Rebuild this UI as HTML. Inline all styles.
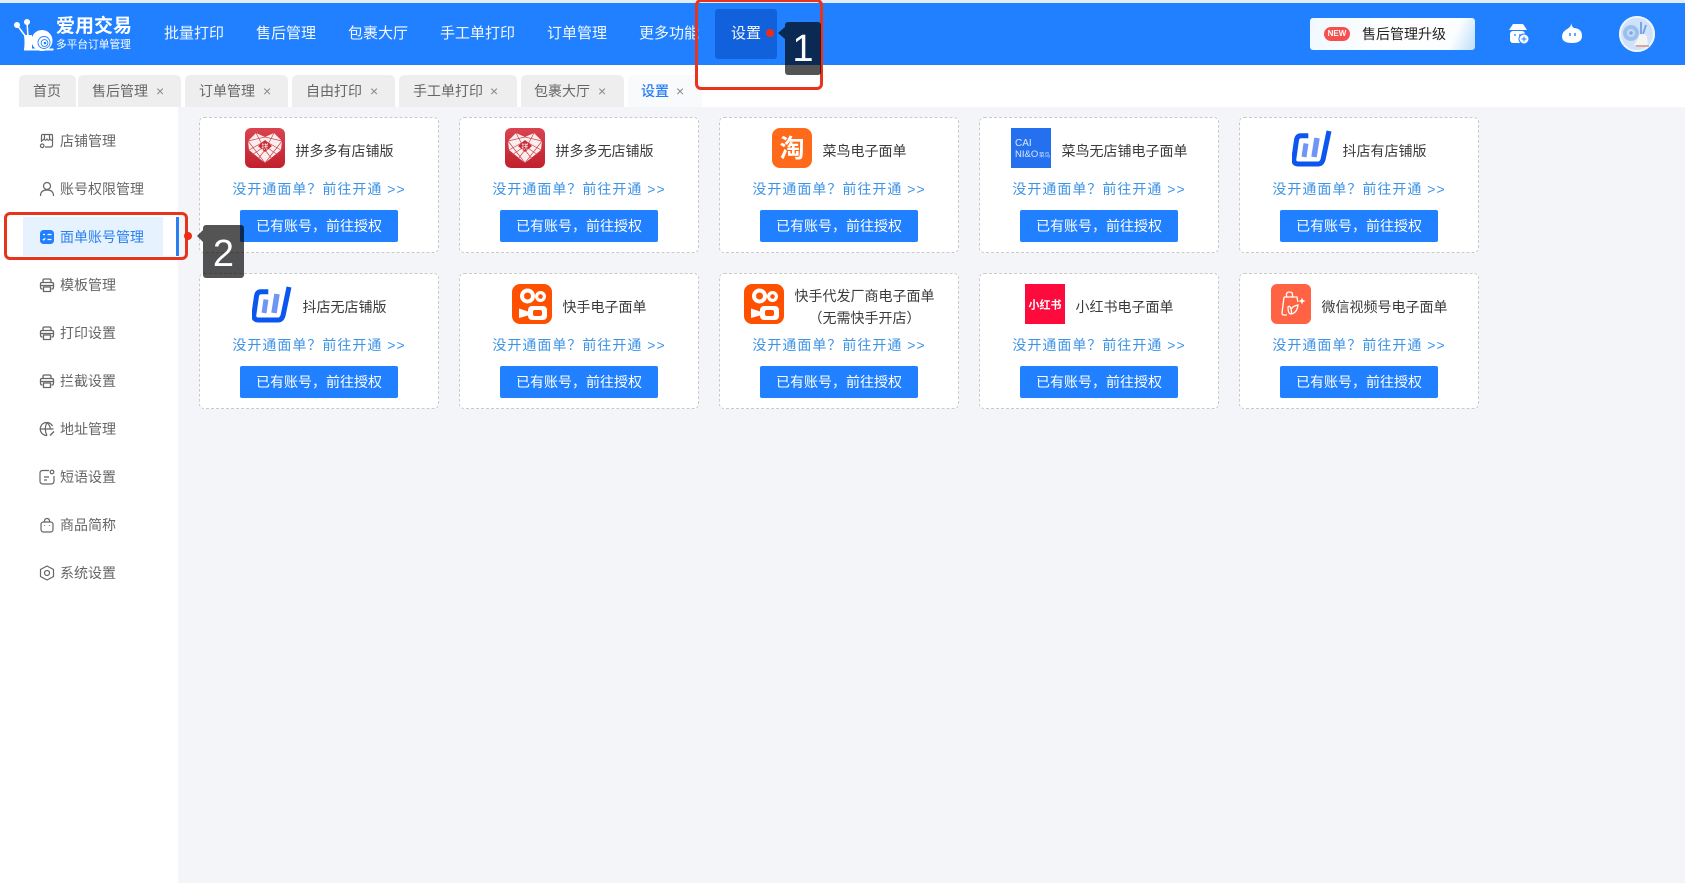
<!DOCTYPE html>
<html lang="zh-CN"><head><meta charset="utf-8"><title>爱用交易</title>
<style>
*{box-sizing:border-box;margin:0;padding:0}
html{background:#f3f5f9}
html,body{width:1685px;height:883px;overflow:hidden}
body{background:#f3f5f9;font-family:"Liberation Sans","Noto Sans CJK SC",sans-serif;font-size:14px;color:#333;filter:blur(.3px)}
.a{position:absolute;white-space:nowrap}
#top{left:0;top:0;width:1685px;height:3px;background:#e3edf6}
#hd{left:0;top:3px;width:1685px;height:62px;background:#2080ff}
.nav{top:23px;height:22px;line-height:22px;color:#fff;font-size:15px;opacity:.95}
#tabbar{left:0;top:65px;width:1685px;height:42px;background:#fff}
.tab{top:75px;height:32px;background:#eeeeee;border-radius:5px 5px 0 0}
.tab b{position:absolute;top:5px;line-height:22px;font-weight:400;font-size:14px;color:#666;white-space:nowrap}
.tab i{position:absolute;top:5px;font-style:normal;line-height:22px;font-size:14px;color:#888;font-family:"Liberation Sans",sans-serif}
#side{left:0;top:107px;width:178px;height:776px;background:#fff}
.si{left:60px;height:22px;line-height:22px;color:#666;font-size:14px}
.ic{position:absolute;left:39px;width:16px;height:16px}
.card{width:240px;height:136px;background:#fff;border:1px dashed #c9c9c9;border-radius:5px}
.h{position:absolute;left:0;top:10px;width:238px;height:40px;display:flex;justify-content:center;align-items:center;gap:11px}
.h svg{flex:none;display:block}
.h span{position:relative;top:3px;font-size:14px;color:#3a3a3a;line-height:22px;text-align:center;white-space:nowrap}
.lk{position:absolute;left:0;top:60px;width:238px;text-align:center;line-height:22px;color:#3d93e6;letter-spacing:1px;font-size:14px;white-space:nowrap}
.bt{position:absolute;left:40px;top:92px;width:158px;height:32px;line-height:32px;text-align:center;color:#fff;background:#2080ff;border-radius:2px;font-size:14px}
.lab{background:rgba(0,0,0,.67);color:#fff;font-family:"Liberation Sans",sans-serif;text-align:center;border-radius:3px}
.red{border:3px solid #e8341c;border-radius:6px}
.dot{width:8px;height:8px;border-radius:50%;background:#ee2c14}
svg.st{fill:none;stroke:#666;stroke-width:1.2}
</style></head><body>
<svg width="0" height="0" style="position:absolute">
<defs>
<linearGradient id="pg" x1="0" y1="0" x2="0" y2="1"><stop offset="0" stop-color="#d9434f"/><stop offset="1" stop-color="#c0202c"/></linearGradient>
<symbol id="pdd" viewBox="0 0 40 40"><rect width="40" height="40" rx="6" fill="url(#pg)"/><path d="M3 13 11 5l9 4 9-4 8 8-1 9-16 13L4 22z" fill="#fbeeee"/><path d="M3 13 20 9 37 13M4 22 20 13 36 22M11 5l9 17 9-17M7 27 20 18 33 27M13 31 20 22 27 31M3 13l17 22M37 13 20 35" stroke="#d0434c" stroke-width=".7" fill="none"/><path d="M20 12 27 18 20 24 13 18z" fill="#c92a35"/><text x="20" y="21" font-size="7" text-anchor="middle" fill="#fff" font-family="Noto Sans CJK SC,sans-serif">拼</text></symbol>
<symbol id="dy" viewBox="0 0 40 40"><path d="M16.300 7.700H9Q5.200 7.700 4.500 12L1.800 31Q1.500 36 6.500 36H26Q30.200 36 31.300 30.300L37 3" fill="none" stroke="#0a56ee" stroke-width="5"/><path d="M14 15.500 12 29" stroke="#6f96f5" stroke-width="5"/><path d="M25 10 22 29" stroke="#6f96f5" stroke-width="5.500"/></symbol>
<symbol id="ks" viewBox="0 0 40 40"><rect width="40" height="40" rx="8" fill="#ff5000"/><circle cx="15.500" cy="12" r="7.500" fill="#fff"/><circle cx="15.500" cy="12" r="3.500" fill="#ff5000"/><circle cx="28.500" cy="12.500" r="5.500" fill="#fff"/><circle cx="28.500" cy="12.500" r="2.300" fill="#ff5000"/><rect x="16" y="22" width="19" height="14" rx="4" fill="#fff"/><rect x="21" y="26" width="9" height="6" rx="2" fill="#ff5000"/><path d="M7 24.500 16 27.500v4L7 34z" fill="#fff"/></symbol>
<symbol id="pr" viewBox="0 0 16 16"><path d="M4 5V3.500Q4 2 5.500 2h5Q12 2 12 3.500V5M3.500 12H3Q1.500 12 1.500 10V7Q1.500 5.500 3 5.500h10q1.500 0 1.500 1.500v3q0 2-1.500 2h-.5M1.500 8.500h13M4.500 10h7v4.500h-7z" fill="none" stroke="#666" stroke-width="1.300"/></symbol>
</defs></svg>

<div class="a" id="top"></div>
<div class="a" id="hd"></div>

<svg class="a" style="left:0;top:0" width="60" height="60" viewBox="0 0 60 60" fill="#fff"><circle cx="17" cy="25" r="3"/><circle cx="27" cy="22" r="3"/><path d="M17 25 26 37M27 22 28 37" stroke="#fff" stroke-width="1.500"/><path d="M24 35h8v15h-8q1-7 0-15z"/><circle cx="42" cy="40.500" r="10.500"/><rect x="24" y="48.500" width="29.500" height="2"/><circle cx="44" cy="42.500" r="6" fill="none" stroke="#2080ff" stroke-width=".9"/><circle cx="44.500" cy="43" r="3.400" fill="none" stroke="#2080ff" stroke-width=".9"/><circle cx="45" cy="43" r="1.300" fill="#2080ff"/></svg>
<div class="a" style="left:56px;top:16px;font-size:19px;line-height:22px;font-weight:700;color:#fff">爱用交易</div>
<div class="a" style="left:56px;top:39px;font-size:10.700px;line-height:13px;color:#fff">多平台订单管理</div>

<div class="a nav" style="left:164px">批量打印</div>
<div class="a nav" style="left:256px">售后管理</div>
<div class="a nav" style="left:348px">包裹大厅</div>
<div class="a nav" style="left:440px">手工单打印</div>
<div class="a nav" style="left:547px">订单管理</div>
<div class="a nav" style="left:639px">更多功能</div>
<div class="a" style="left:715px;top:9px;width:62px;height:50px;background:#1261dc;border-radius:3px"></div>
<div class="a nav" style="left:731px">设置</div>

<div class="a" style="left:1310px;top:18px;width:165px;height:32px;border-radius:3px;background:linear-gradient(115deg,#f0f8ff 0%,#ffffff 50%,#fbfdff 85%,#bcdff7 100%)"></div>
<div class="a" style="left:1324px;top:27px;width:26px;height:14px;border-radius:7px;background:#f5504e;color:#fff;font-size:8px;line-height:14px;text-align:center;font-weight:700">NEW</div>
<div class="a" style="left:1362px;top:23px;line-height:22px;font-size:14px;color:#222">售后管理升级</div>
<svg class="a" style="left:1508px;top:23px" width="22" height="22" viewBox="0 0 22 22"><path d="M5 1h10l4 6H1z" fill="#fff"/><rect x="2" y="8" width="15" height="12" rx="3" fill="#fff"/><path d="M6 12h2M11 12h2" stroke="#2080ff" stroke-width="1.200"/><circle cx="16" cy="16" r="5" fill="#fff" stroke="#2080ff"/><path d="M16 13.500v5M13.500 16h5" stroke="#2080ff"/></svg>
<svg class="a" style="left:1562px;top:23px" width="21" height="21" viewBox="0 0 21 21"><path d="M9 0Q9.500 3 6 5.500 0 8.500 0 13.500 0 20 10 20 20 20 20 13 20 5.500 12 5 10 4 9 0z" fill="#fff"/><path d="M8 10v3M13 10v3" stroke="#2080ff" stroke-width="1.400"/></svg>
<svg class="a" style="left:1619px;top:16px" width="36" height="36" viewBox="0 0 36 36"><circle cx="18" cy="18" r="18" fill="#cfe2fa"/><circle cx="18" cy="18" r="17" fill="none" stroke="#eef5fd" stroke-width="2"/><circle cx="12" cy="17" r="8" fill="#9cc0ee"/><circle cx="12" cy="17" r="4" fill="#c4daf6"/><circle cx="12" cy="17" r="1.800" fill="#7fa9e4"/><path d="M22 6v12M27 9l-3 9" stroke="#6f9fe6" stroke-width="1.800"/><path d="M20 19q6-3 8 2l1 8H15q3-4 5-10z" fill="#f4f4f4"/><path d="M17 30h13" stroke="#d9a79c" stroke-width="2"/></svg>

<div class="a" id="tabbar"></div>
<div class="a tab" style="left:19px;width:57px"><b style="left:14px">首页</b></div>
<div class="a tab" style="left:78px;width:103px"><b style="left:14px">售后管理</b><i style="left:78px">×</i></div>
<div class="a tab" style="left:185px;width:103px"><b style="left:14px">订单管理</b><i style="left:78px">×</i></div>
<div class="a tab" style="left:292px;width:103px"><b style="left:14px">自由打印</b><i style="left:78px">×</i></div>
<div class="a tab" style="left:399px;width:118px"><b style="left:14px">手工单打印</b><i style="left:91px">×</i></div>
<div class="a tab" style="left:521px;width:103px"><b style="left:13px">包裹大厅</b><i style="left:77px">×</i></div>
<div class="a tab" style="left:628px;width:74px;background:#f8fafc"><b style="left:13px;color:#2a7ff0;font-weight:500">设置</b><i style="left:48px">×</i></div>

<div class="a" id="side"></div>
<div class="a" style="left:23px;top:217px;width:140px;height:39px;background:#e6f3fe"></div>
<div class="a" style="left:176px;top:217px;width:3px;height:39px;background:#2a7ff0"></div>

<svg class="ic st" style="top:133px" viewBox="0 0 16 16"><path d="M2.500 9V2.500q0-1 1-1h9q1 0 1 1V12q0 2-2 2H6M2 6q1.500 2.500 3 0 1.500 2.500 3 0 1.500 2.500 3 0 1.500 2.500 3 0M5.500 1.500V6M10.500 1.500V6"/><circle cx="3.200" cy="12.800" r="1.800"/></svg>
<div class="a si" style="top:130px">店铺管理</div>
<svg class="ic st" style="top:181px" viewBox="0 0 16 16"><circle cx="8" cy="5" r="3.500"/><path d="M1.500 15q0-6 6.500-6t6.500 6"/></svg>
<div class="a si" style="top:178px">账号权限管理</div>
<svg class="ic" style="top:229px" viewBox="0 0 16 16"><rect x="1" y="1" width="14" height="14" rx="3.500" fill="#2080ff"/><path d="M4 5.500h2M8.500 5.500h4M3.800 10l1 1 1.500-1.800M8.500 10.500h4" stroke="#fff" stroke-width="1.200" fill="none"/></svg>
<div class="a si" style="top:226px;color:#2a7ff0">面单账号管理</div>
<svg class="ic" style="top:277px"><use href="#pr"/></svg>
<div class="a si" style="top:274px">模板管理</div>
<svg class="ic" style="top:325px"><use href="#pr"/></svg>
<div class="a si" style="top:322px">打印设置</div>
<svg class="ic" style="top:373px"><use href="#pr"/></svg>
<div class="a si" style="top:370px">拦截设置</div>
<svg class="ic st" style="top:421px" viewBox="0 0 16 16"><path d="M13.500 5A6.500 6.500 0 1 0 8 14.500M1.500 8h13M8 1.500Q4.500 8 8 14.500M8 1.500q3 3 3.300 6"/><path d="M10.500 14l4-4 1 1-4 4z" fill="#666" stroke="none"/></svg>
<div class="a si" style="top:418px">地址管理</div>
<svg class="ic st" style="top:469px" viewBox="0 0 16 16"><path d="M10 1.500H4Q1 1.500 1 4v8q0 3 3 3h8q3 0 3-3V7M5 8h5M5 11h3"/><circle cx="13" cy="3" r="1.800"/></svg>
<div class="a si" style="top:466px">短语设置</div>
<svg class="ic st" style="top:517px" viewBox="0 0 16 16"><rect x="2" y="5" width="12" height="10" rx="2.500"/><path d="M5.500 5V4q0-2.500 2.500-2.500T10.500 4v1M5.500 8v.8M10.500 8v.8"/></svg>
<div class="a si" style="top:514px">商品简称</div>
<svg class="ic st" style="top:565px" viewBox="0 0 16 16"><path d="M8 1 14.500 4.500v7L8 15 1.500 11.500v-7z"/><circle cx="8" cy="8" r="2.500"/></svg>
<div class="a si" style="top:562px">系统设置</div>

<!-- row 1 -->
<div class="a card" style="left:199px;top:117px"><div class="h"><svg width="40" height="40"><use href="#pdd"/></svg><span>拼多多有店铺版</span></div><div class="lk">没开通面单&#xFF1F;前往开通 &gt;&gt;</div><div class="bt">已有账号&#xFF0C;前往授权</div></div>
<div class="a card" style="left:459px;top:117px"><div class="h"><svg width="40" height="40"><use href="#pdd"/></svg><span>拼多多无店铺版</span></div><div class="lk">没开通面单&#xFF1F;前往开通 &gt;&gt;</div><div class="bt">已有账号&#xFF0C;前往授权</div></div>
<div class="a card" style="left:719px;top:117px"><div class="h"><svg width="40" height="40" viewBox="0 0 40 40"><rect width="40" height="40" rx="8" fill="#ff6a1a"/><text x="20" y="29" font-size="25" font-weight="700" text-anchor="middle" fill="#fff" font-family="Noto Sans CJK SC,sans-serif">淘</text></svg><span>菜鸟电子面单</span></div><div class="lk">没开通面单&#xFF1F;前往开通 &gt;&gt;</div><div class="bt">已有账号&#xFF0C;前往授权</div></div>
<div class="a card" style="left:979px;top:117px"><div class="h"><svg width="40" height="40" viewBox="0 0 40 40"><rect width="40" height="40" fill="#2470ee"/><text x="4" y="18" font-size="10" fill="#dce9ff" font-family="Liberation Sans,sans-serif">CAI</text><text x="4" y="29" font-size="9.500" fill="#dce9ff" font-family="Liberation Sans,sans-serif">NI&amp;O</text><text x="28" y="29" font-size="5.500" fill="#dce9ff" font-family="Noto Sans CJK SC,sans-serif">菜鸟</text></svg><span>菜鸟无店铺电子面单</span></div><div class="lk">没开通面单&#xFF1F;前往开通 &gt;&gt;</div><div class="bt">已有账号&#xFF0C;前往授权</div></div>
<div class="a card" style="left:1239px;top:117px"><div class="h"><svg width="40" height="40"><use href="#dy"/></svg><span>抖店有店铺版</span></div><div class="lk">没开通面单&#xFF1F;前往开通 &gt;&gt;</div><div class="bt">已有账号&#xFF0C;前往授权</div></div>
<!-- row 2 -->
<div class="a card" style="left:199px;top:273px"><div class="h"><svg width="40" height="40"><use href="#dy"/></svg><span>抖店无店铺版</span></div><div class="lk">没开通面单&#xFF1F;前往开通 &gt;&gt;</div><div class="bt">已有账号&#xFF0C;前往授权</div></div>
<div class="a card" style="left:459px;top:273px"><div class="h"><svg width="40" height="40"><use href="#ks"/></svg><span>快手电子面单</span></div><div class="lk">没开通面单&#xFF1F;前往开通 &gt;&gt;</div><div class="bt">已有账号&#xFF0C;前往授权</div></div>
<div class="a card" style="left:719px;top:273px"><div class="h"><svg width="40" height="40"><use href="#ks"/></svg><span>快手代发厂商电子面单<br>&#xFF08;无需快手开店&#xFF09;</span></div><div class="lk">没开通面单&#xFF1F;前往开通 &gt;&gt;</div><div class="bt">已有账号&#xFF0C;前往授权</div></div>
<div class="a card" style="left:979px;top:273px"><div class="h"><svg width="40" height="40" viewBox="0 0 40 40"><rect width="40" height="40" fill="#ff0a3c"/><text x="20" y="24.500" font-size="11" font-weight="700" text-anchor="middle" fill="#fff" font-family="Noto Sans CJK SC,sans-serif">小红书</text></svg><span>小红书电子面单</span></div><div class="lk">没开通面单&#xFF1F;前往开通 &gt;&gt;</div><div class="bt">已有账号&#xFF0C;前往授权</div></div>
<div class="a card" style="left:1239px;top:273px"><div class="h"><svg width="40" height="40" viewBox="0 0 40 40"><rect width="40" height="40" rx="6" fill="#ff6343"/><path d="M13 13h13l.8 5M16 31h-3q-2 0-2-2l2-16M15.500 13V10.500q0-2.500 3-2.500t3 2.500V13" fill="none" stroke="#fff" stroke-width="1.300"/><path d="M17 23q2-2 3 2t0 5q-3 0-3-7zM20 25q2-3 7-4-1 8-7 9" fill="none" stroke="#fff" stroke-width="1.300"/><path d="M31 13.500l1 2.500 2.500 1-2.500 1-1 2.500-1-2.500-2.500-1 2.500-1z" fill="#fff"/></svg><span>微信视频号电子面单</span></div><div class="lk">没开通面单&#xFF1F;前往开通 &gt;&gt;</div><div class="bt">已有账号&#xFF0C;前往授权</div></div>

<!-- annotations -->
<div class="a red" style="left:695px;top:-1px;width:128px;height:91px"></div>
<div class="a dot" style="left:766px;top:29px"></div>
<div class="a" style="left:778px;top:27px;width:0;height:0;border:6px solid transparent;border-left:0;border-right:7px solid rgba(0,0,0,.67)"></div>
<div class="a lab" style="left:785px;top:22px;width:36px;height:53px;font-size:38px;line-height:54px">1</div>

<div class="a red" style="left:4px;top:212px;width:184px;height:48px"></div>
<div class="a dot" style="left:184px;top:232px"></div>
<div class="a" style="left:197px;top:230px;width:0;height:0;border:6px solid transparent;border-left:0;border-right:6px solid rgba(0,0,0,.67)"></div>
<div class="a lab" style="left:203px;top:225px;width:41px;height:53px;font-size:38px;line-height:58px">2</div>
</body></html>
